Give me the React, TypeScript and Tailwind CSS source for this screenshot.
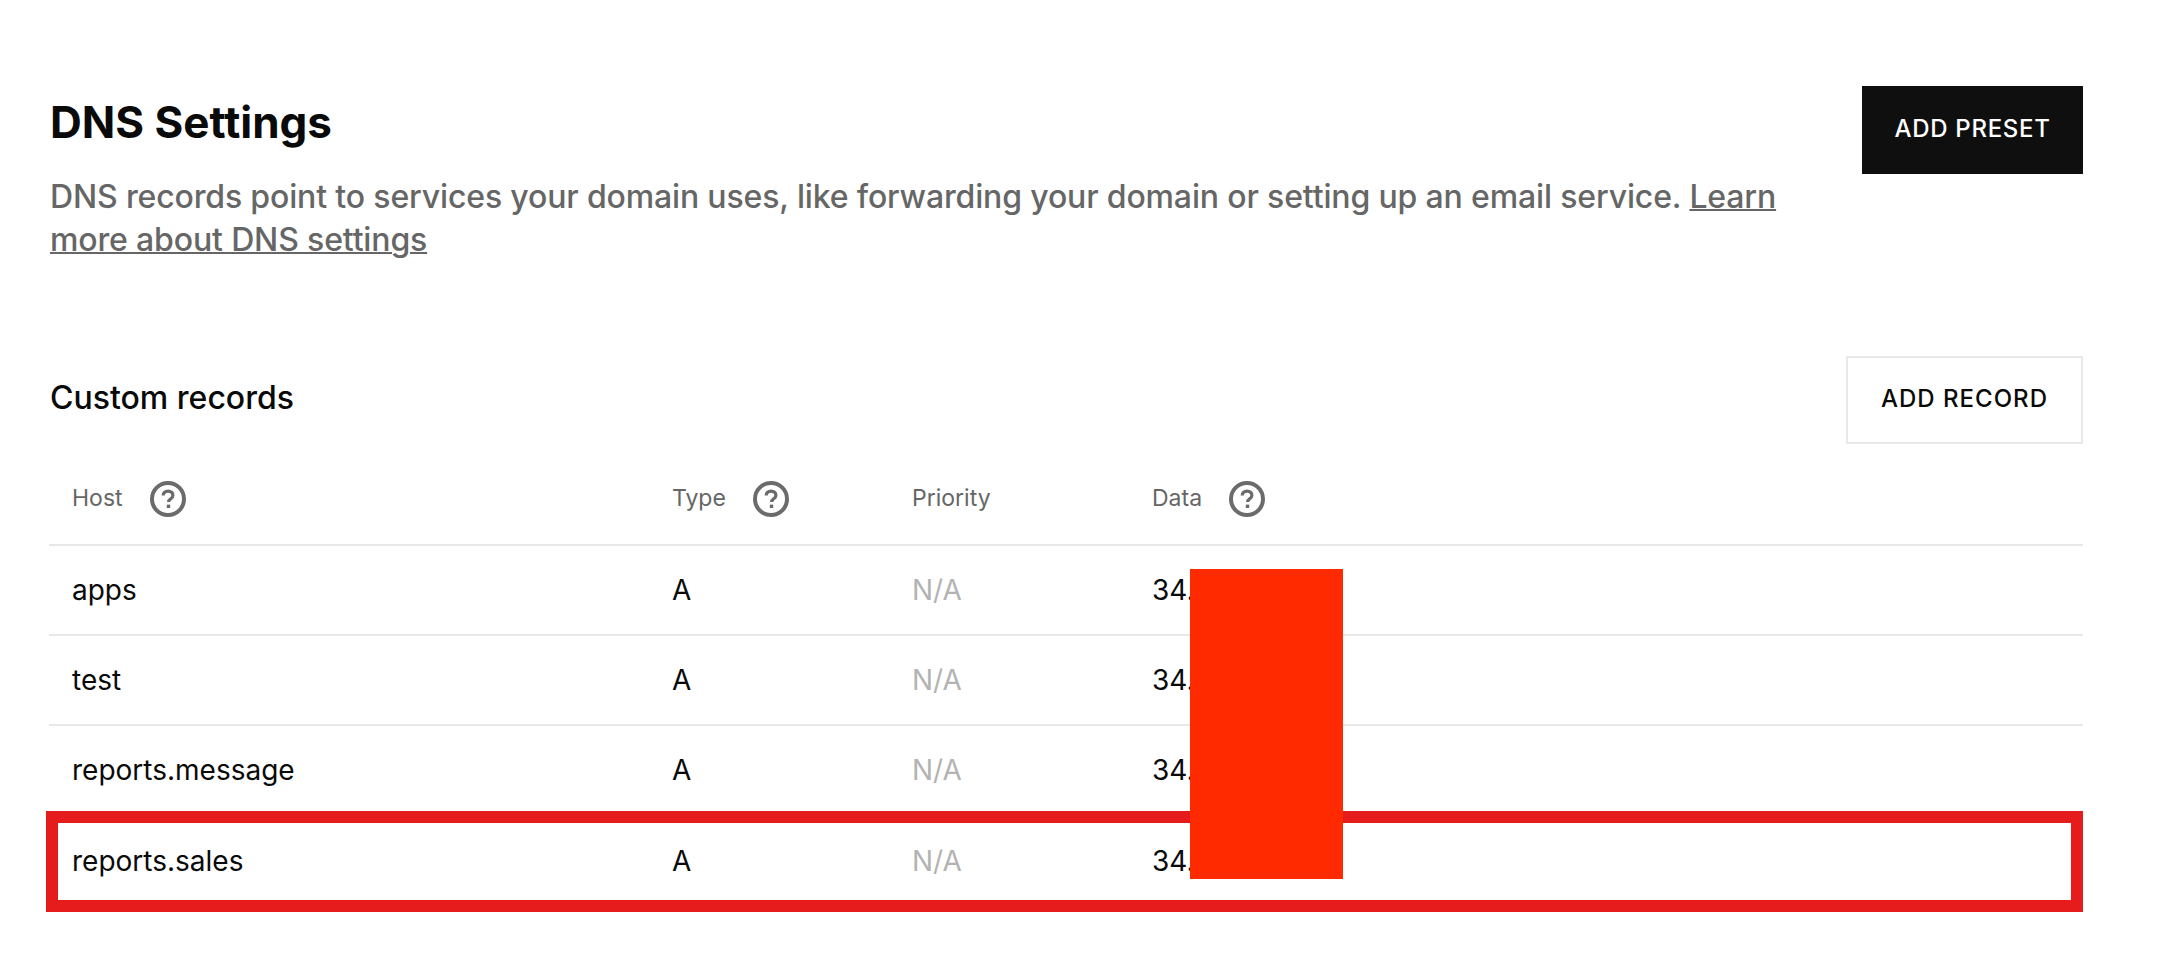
const Help = () => (
  <svg width="36" height="36" viewBox="0 0 36 36" fill="none" className="shrink-0">
    <circle cx="18" cy="18" r="16" stroke="#6b6b6b" strokeWidth="4" />
    <path d="M13.200 14.600c0-2.800 2.100-4.500 4.900-4.500 2.900 0 4.800 1.700 4.800 4.100 0 1.800-.9 2.800-2.300 3.700-1.300.9-1.900 1.500-1.900 3.100" stroke="#6b6b6b" strokeWidth="3.200" />
    <rect x="16.800" y="23.600" width="3.400" height="3.400" fill="#6b6b6b" />
  </svg>
);

const rows = ["apps", "test", "reports.message", "reports.sales"];

export default function App() {
  return (
    <div className="relative h-[962px] overflow-hidden bg-white font-['Inter','Liberation_Sans',sans-serif] text-[#0a0a0a]">
      <div className="pl-[50px] pr-[91px] pt-[86px]">
        <div className="flex items-start justify-between">
          <div className="w-[1780px]">
            <h1 className="text-[44px] font-bold leading-[72px]">DNS Settings</h1>
            <p className="mt-[17px] text-[32px] font-medium leading-[43px] tracking-[-0.15px] text-[#666666]">
              DNS records point to services your domain uses, like forwarding your domain or setting up an email service.{" "}
              <a className="underline decoration-2">Learn more about DNS settings</a>
            </p>
          </div>
          <button className="flex h-[88px] w-[221px] items-center justify-center bg-[#0f0f0f] pb-[3px] text-[24px] font-medium tracking-[0.7px] text-white">
            ADD PRESET
          </button>
        </div>

        <div className="mt-[95px] flex items-center justify-between">
          <h2 className="pb-[5px] text-[32px] font-medium">Custom records</h2>
          <button className="flex h-[88px] w-[237px] items-center justify-center border-2 border-[#e8e8e8] pb-[3px] text-[24px] font-medium tracking-[1px]">
            ADD RECORD
          </button>
        </div>

        <div className="-ml-px grid h-[102px] grid-cols-[600px_240px_240px_1fr] items-center border-b-2 border-[#e8e8e8] pl-[23px] pt-[9px] text-[23px] text-[#666666]">
          <div className="flex items-center gap-[27px]"><span>Host</span><Help /></div>
          <div className="flex items-center gap-[27px]"><span>Type</span><Help /></div>
          <div>Priority</div>
          <div className="flex items-center gap-[27px]"><span>Data</span><Help /></div>
        </div>

        {rows.map((r, i) => (
          <div
            key={r}
            className={`-ml-px grid h-[90px] grid-cols-[600px_240px_240px_1fr] items-center pl-[23px] text-[28px] ${i < 3 ? "border-b-2 border-[#e8e8e8]" : ""}`}
          >
            <div>{r}</div>
            <div>A</div>
            <div className="text-[#b3b3b3]">N/A</div>
            <div>34.</div>
          </div>
        ))}
      </div>

      <div className="absolute left-[46px] top-[811px] h-[101px] w-[2037px] border-[12px] border-[#e61c1c]" />
      <div className="absolute left-[1190px] top-[569px] h-[310px] w-[153px] bg-[#ff2a00]" />
    </div>
  );
}
